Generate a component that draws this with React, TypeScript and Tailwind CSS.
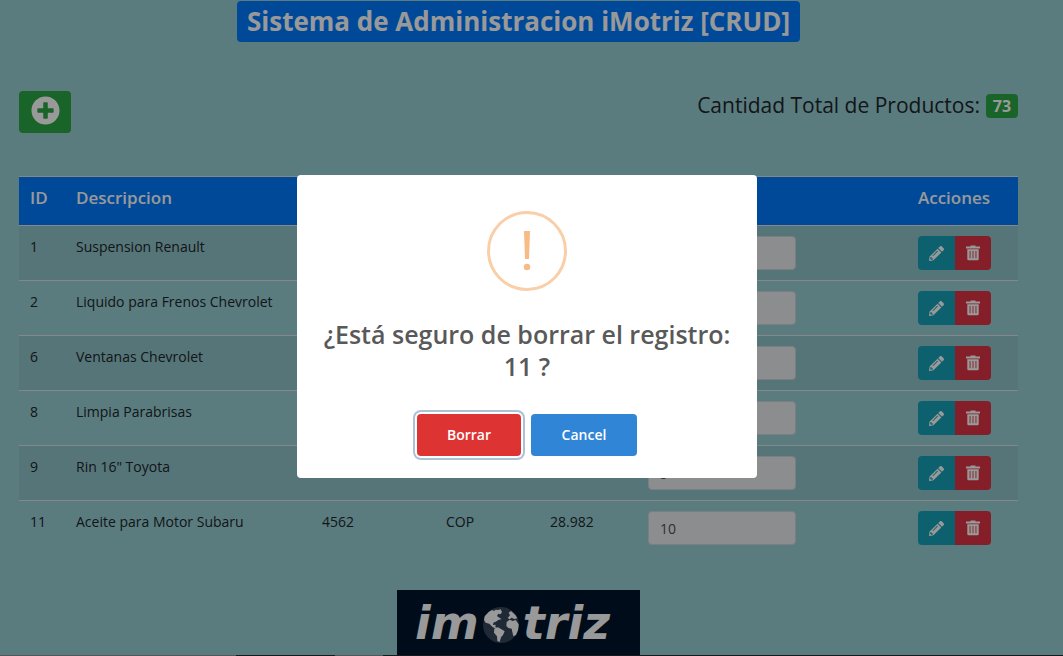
import { FaPencilAlt, FaPlusCircle } from "react-icons/fa";

type Product = {
  id: number;
  description: string;
  code?: string;
  currency?: string;
  price?: string;
  stock: number;
};

const products: Product[] = [
  { id: 1, description: "Suspension Renault", stock: 20 },
  { id: 2, description: "Liquido para Frenos Chevrolet", stock: 15 },
  { id: 6, description: "Ventanas Chevrolet", stock: 12 },
  { id: 8, description: "Limpia Parabrisas", stock: 11 },
  { id: 9, description: 'Rin 16" Toyota', stock: 5 },
  { id: 11, description: "Aceite para Motor Subaru", code: "4562", currency: "COP", price: "28.982", stock: 10 },
];

function ProductRow({ product }: { product: Product }) {
  return (
    <tr className="border-t border-[#dee2e6] align-top odd:bg-black/5">
      <td className="px-[11px] py-[10px]">{product.id}</td>
      <td className="px-[11px] py-[10px] whitespace-nowrap">{product.description}</td>
      <td className="px-[11px] py-[10px]">{product.code}</td>
      <td className="px-[11px] py-[10px]">{product.currency}</td>
      <td className="px-[11px] py-[10px]">{product.price}</td>
      <td className="px-[11px] py-[10px]">
        <input
          type="text"
          readOnly
          value={product.stock}
          aria-label={`Stock ${product.description}`}
          className="block h-[34px] w-[148px] rounded border border-[#ced4da] bg-[#e9ecef] px-[11px] text-sm text-[#495057]"
        />
      </td>
      <td className="px-[11px] py-[10px]">
        <div className="flex text-white">
          <button type="button" aria-label="Editar" className="flex h-[34px] w-[37px] items-center justify-center rounded-l bg-[#17a2b8]">
            <FaPencilAlt className="size-[15px]" />
          </button>
          <button type="button" aria-label="Borrar" className="flex h-[34px] w-9 items-center justify-center rounded-r bg-[#dc3545]">
            <svg viewBox="0 0 14 16" className="h-4 w-[14px]" fill="currentColor" aria-hidden="true">
              <path d="M4.5 0.5 H9.5 V1.5 H14 V3.5 H0 V1.5 H4.5 Z" />
              <path
                fillRule="evenodd"
                d="M1.3 4.3 H12.7 V14 Q12.7 15.2 11.5 15.2 H2.5 Q1.3 15.2 1.3 14 Z M3.6 6 V13.2 H4.5 V6 Z M6.55 6 V13.2 H7.45 V6 Z M9.5 6 V13.2 H10.4 V6 Z"
              />
            </svg>
          </button>
        </div>
      </td>
    </tr>
  );
}

function Globe() {
  return (
    <svg viewBox="0 0 108 108" className="mt-1 size-9" aria-hidden="true">
      <circle cx="54" cy="54" r="54" fill="#34465a" />
      <g fill="#fff">
        <path d="M5 28 Q14 14 27 9 L33 12 L38 8 L45 9 L53 7 L57 15 L53 22 L46 20 L42 27 L49 32 L56 36 L46 39 L38 44 L31 47 L30 54 L38 53 L37 61 L45 63 L39 66 L28 59 L19 50 L8 47 L3 39 Z" />
        <path d="M34 65 L45 61 L54 66 L65 73 L60 84 L54 91 L50 105 L43 102 L42 88 L33 77 Z" />
        <path d="M71 45 L80 38 L89 42 L98 39 L107 52 Q108 67 99 84 L91 88 L88 75 L86 65 L76 63 L70 57 Z" />
        <path d="M74 33 L81 25 L77 17 L84 12 L97 24 L103 34 L94 36 L86 32 L80 37 Z" />
      </g>
    </svg>
  );
}

function Logo() {
  return (
    <div className="flex h-[65px] w-[243px] items-center gap-1 bg-[#00142a] pl-[18px] text-[46px] leading-none font-bold text-white italic font-['DejaVu_Sans',sans-serif]">
      <span>im</span>
      <Globe />
      <span>triz</span>
    </div>
  );
}

function ConfirmDialog() {
  return (
    <div className="fixed inset-0 flex items-center justify-center bg-black/40 pr-[9px] pb-[3px]">
      <div
        role="dialog"
        aria-modal="true"
        aria-labelledby="confirm-title"
        className="flex w-[460px] flex-col items-center rounded bg-white px-5 pt-9 pb-[22px]"
      >
        <svg viewBox="0 0 80 80" className="size-20" aria-hidden="true">
          <circle cx="40" cy="40" r="38.5" fill="none" stroke="#facea8" strokeWidth="3" />
          <path d="M37 20 H43 L42 48 H38 Z" fill="#f8bb86" />
          <circle cx="40" cy="56" r="3.2" fill="#f8bb86" />
        </svg>
        <h2 id="confirm-title" className="mt-[27px] text-center text-[25px] leading-8 font-semibold text-[#595959]">
          ¿Está seguro de borrar el registro: 11 ?
        </h2>
        <div className="mt-8 flex gap-[10px] text-sm font-semibold text-white">
          <button type="button" className="h-[42px] w-[104px] rounded bg-[#dd3333] shadow-[0_0_0_2px_#fff,0_0_0_4px_rgba(50,100,150,0.4)]">
            Borrar
          </button>
          <button type="button" className="h-[42px] w-[106px] rounded bg-[#3085d6]">
            Cancel
          </button>
        </div>
      </div>
    </div>
  );
}

export default function App() {
  return (
    <div className="flex min-h-screen flex-col bg-[#96cfd4] text-[#212529] font-['Open_Sans','Noto_Sans',sans-serif]">
      <main className="flex flex-col pr-[45px] pl-[19px]">
        <h1 className="mt-px self-center rounded bg-[#007bff] px-[10px] text-[26px] leading-[41px] font-bold text-white">
          Sistema de Administracion iMotriz [CRUD]
        </h1>

        <div className="mt-[49px] flex items-start justify-between">
          <button type="button" aria-label="Agregar producto" className="flex h-[42px] w-[52px] justify-center rounded bg-[#28a745] pt-[5px] text-white">
            <FaPlusCircle className="size-[29px]" />
          </button>
          <h5 className="flex items-center gap-[6px] text-[21px] leading-[26px] font-medium">
            Cantidad Total de Productos:
            <span className="mt-[3px] w-8 rounded bg-[#28a745] text-center text-base leading-6 font-bold text-white">73</span>
          </h5>
        </div>

        <table className="mt-[43px] w-full table-fixed text-left text-sm leading-[22px]">
          <colgroup>
            <col className="w-[46px]" />
            <col />
            <col className="w-[124px]" />
            <col className="w-[104px]" />
            <col className="w-[98px]" />
            <col className="w-[270px]" />
            <col className="w-[111px]" />
          </colgroup>
          <thead>
            <tr className="h-[49px] border-t border-[#dee2e6] bg-[#007bff] align-top text-[17px] leading-6 text-white">
              <th className="px-[11px] pt-[9px] font-semibold">ID</th>
              <th className="px-[11px] pt-[9px] font-semibold">Descripcion</th>
              <th className="px-[11px] pt-[9px] font-semibold">Codigo</th>
              <th className="px-[11px] pt-[9px] font-semibold">Moneda</th>
              <th className="px-[11px] pt-[9px] font-semibold">Precio</th>
              <th className="px-[11px] pt-[9px] font-semibold">Stock</th>
              <th className="px-[11px] pt-[9px] font-semibold">Acciones</th>
            </tr>
          </thead>
          <tbody>
            {products.map((product) => (
              <ProductRow key={product.id} product={product} />
            ))}
          </tbody>
        </table>

        <div className="mt-[35px] flex justify-center">
          <Logo />
        </div>
      </main>
      <div className="mt-auto flex h-px bg-[#2a2a30]">
        <div className="w-[236px] bg-[#909095]" />
        <div className="ml-[99px] w-12 bg-[#909095]" />
      </div>
      <ConfirmDialog />
    </div>
  );
}
